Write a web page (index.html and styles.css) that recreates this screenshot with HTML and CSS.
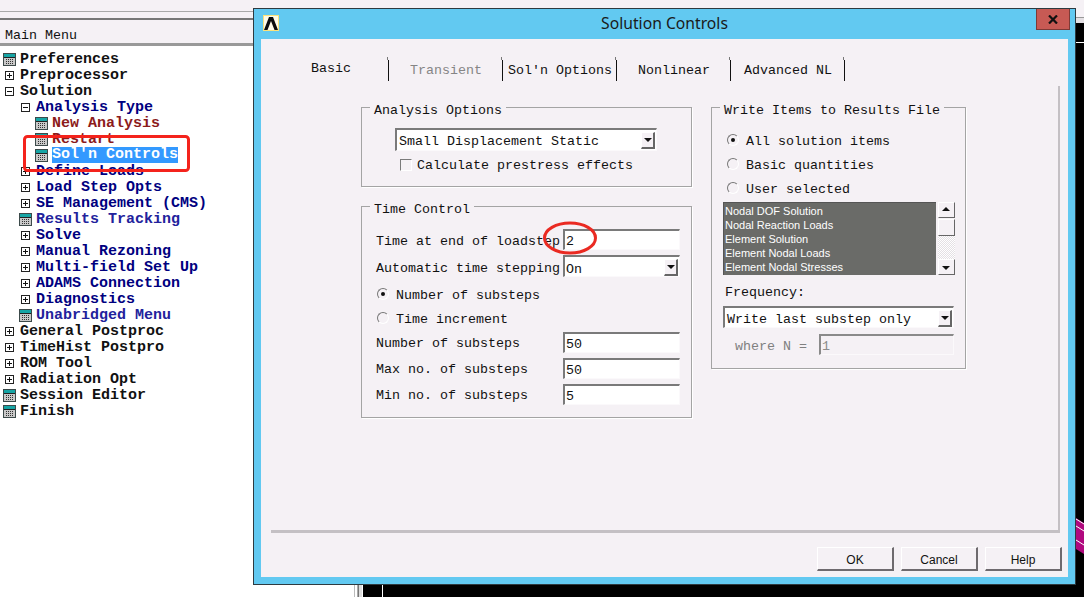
FILE: index.html
```html
<!DOCTYPE html>
<html lang="en">
<head>
<meta charset="utf-8">
<title>Solution Controls</title>
<link rel="stylesheet" href="styles.css">
</head>
<body>
<svg class="defs" width="0" height="0" aria-hidden="true">
  <symbol id="calc" viewBox="0 0 13 13">
    <rect x="0.5" y="0.5" width="12" height="12" fill="#c9c9c9" stroke="#3c4a4a"/>
    <rect x="1" y="1" width="11" height="3" fill="#16a5a5"/>
    <path d="M1 4.5h11" stroke="#222"/>
    <path d="M3 6.5h1M5 6.5h1M7 6.5h1M9 6.5h1M3 8.5h1M5 8.5h1M7 8.5h1M9 8.5h1M3 10.5h1M5 10.5h1M7 10.5h1M9 10.5h1" stroke="#333"/>
  </symbol>
  <symbol id="plus" viewBox="0 0 13 13">
    <rect x="2.5" y="2.5" width="8" height="8" fill="#fff" stroke="#222"/>
    <path d="M4 6.5h5M6.500 4v5" stroke="#111"/>
  </symbol>
  <symbol id="minus" viewBox="0 0 13 13">
    <rect x="2.5" y="2.500" width="8" height="8" fill="#fff" stroke="#222"/>
    <path d="M4 6.500h5" stroke="#111"/>
  </symbol>
</svg>

<div class="desktop">
  <aside class="panel">
    <div class="band band-a"></div>
    <div class="band band-b"></div>
    <div class="panel-title">Main Menu</div>
    <ul class="tree">
      <li class="node"><svg class="ico"><use href="#calc"/></svg>Preferences</li>
      <li class="node"><svg class="ico"><use href="#plus"/></svg>Preprocessor</li>
      <li class="node"><svg class="ico"><use href="#minus"/></svg>Solution</li>
      <li class="node l1 navy"><svg class="ico"><use href="#minus"/></svg>Analysis Type</li>
      <li class="node l2 maroon"><svg class="ico"><use href="#calc"/></svg>New Analysis</li>
      <li class="node l2 maroon"><svg class="ico"><use href="#calc"/></svg>Restart</li>
      <li class="node l2"><svg class="ico"><use href="#calc"/></svg><span class="selected">Sol'n Controls</span></li>
      <li class="node l1 navy"><svg class="ico"><use href="#plus"/></svg>Define Loads</li>
      <li class="node l1 navy"><svg class="ico"><use href="#plus"/></svg>Load Step Opts</li>
      <li class="node l1 navy"><svg class="ico"><use href="#plus"/></svg>SE Management (CMS)</li>
      <li class="node l1 blue"><svg class="ico"><use href="#calc"/></svg>Results Tracking</li>
      <li class="node l1 navy"><svg class="ico"><use href="#plus"/></svg>Solve</li>
      <li class="node l1 navy"><svg class="ico"><use href="#plus"/></svg>Manual Rezoning</li>
      <li class="node l1 navy"><svg class="ico"><use href="#plus"/></svg>Multi-field Set Up</li>
      <li class="node l1 navy"><svg class="ico"><use href="#plus"/></svg>ADAMS Connection</li>
      <li class="node l1 navy"><svg class="ico"><use href="#plus"/></svg>Diagnostics</li>
      <li class="node l1 blue"><svg class="ico"><use href="#calc"/></svg>Unabridged Menu</li>
      <li class="node"><svg class="ico"><use href="#plus"/></svg>General Postproc</li>
      <li class="node"><svg class="ico"><use href="#plus"/></svg>TimeHist Postpro</li>
      <li class="node"><svg class="ico"><use href="#plus"/></svg>ROM Tool</li>
      <li class="node"><svg class="ico"><use href="#plus"/></svg>Radiation Opt</li>
      <li class="node"><svg class="ico"><use href="#calc"/></svg>Session Editor</li>
      <li class="node"><svg class="ico"><use href="#calc"/></svg>Finish</li>
    </ul>
  </aside>
  <div class="strip"></div>
  <div class="backdrop">
    <div class="back-top"></div>
    <div class="back-rule"></div>
    <svg class="mesh" width="8" height="36" viewBox="0 0 8 36" aria-hidden="true">
      <polygon points="0,0 8,5 8,36 0,31" fill="#b0087e"/>
      <path d="M0 1l8 5M0 8l8 5M0 22l8 5" stroke="#fff" fill="none"/>
    </svg>
  </div>
</div>

<section class="dialog">
  <header class="titlebar">
    <svg class="logo" width="16" height="16" viewBox="0 0 16 16" aria-hidden="true">
      <rect width="16" height="16" fill="#fbe27a"/>
      <rect x="1" y="1" width="14" height="14" fill="#fffbe8"/>
      <polygon points="1,15 6,2 10,2 15,15 11.500,15 8,6 4.500,15" fill="#0c0c0c"/>
    </svg>
    <h1 class="title">Solution Controls</h1>
    <div class="close">
      <svg width="10" height="9" viewBox="0 0 10 9" aria-hidden="true"><path d="M1 .5l8 8M9 .5l-8 8" stroke="#111" stroke-width="2.200"/></svg>
    </div>
  </header>
  <div class="client">
    <nav class="tabs">
      <div class="tab tab-active">Basic</div>
      <div class="tab tab-off">Transient</div>
      <div class="tab">Sol'n Options</div>
      <div class="tab">Nonlinear</div>
      <div class="tab">Advanced NL</div>
    </nav>
    <div class="tabpanel">
      <div class="col">
        <div class="group g-analysis">
          <span class="legend">Analysis Options</span>
          <div class="combo c-analysis">Small Displacement Static<span class="drop"></span></div>
          <label class="check"><span class="box"></span>Calculate prestress effects</label>
        </div>
        <div class="group g-time">
          <span class="legend">Time Control</span>
          <div class="row row-high"><span class="lab">Time at end of loadstep</span><div class="field">2</div></div>
          <div class="row row-tall row-high"><span class="lab">Automatic time stepping</span><div class="combo c-row">On<span class="drop"></span></div></div>
          <div class="radio-row"><span class="radio on"></span>Number of substeps</div>
          <div class="radio-row"><span class="radio"></span>Time increment</div>
          <div class="row row-first"><span class="lab">Number of substeps</span><div class="field">50</div></div>
          <div class="row"><span class="lab">Max no. of substeps</span><div class="field">50</div></div>
          <div class="row"><span class="lab">Min no. of substeps</span><div class="field">5</div></div>
        </div>
      </div>
      <div class="group g-write">
        <span class="legend">Write Items to Results File</span>
        <div class="radio-row"><span class="radio on"></span>All solution items</div>
        <div class="radio-row"><span class="radio"></span>Basic quantities</div>
        <div class="radio-row"><span class="radio"></span>User selected</div>
        <div class="listwrap">
          <ul class="list">
            <li>Nodal DOF Solution</li>
            <li>Nodal Reaction Loads</li>
            <li>Element Solution</li>
            <li>Element Nodal Loads</li>
            <li>Element Nodal Stresses</li>
          </ul>
          <div class="scroll">
            <span class="sb sb-up"></span>
            <span class="sb sb-thumb"></span>
            <span class="sb-track"></span>
            <span class="sb sb-down"></span>
          </div>
        </div>
        <div class="freq">Frequency:</div>
        <div class="combo c-freq">Write last substep only<span class="drop"></span></div>
        <div class="where"><span class="where-lab">where N =</span><div class="field field-off">1</div></div>
      </div>
    </div>
    <footer class="actions">
      <button class="btn" type="button">OK</button>
      <button class="btn" type="button">Cancel</button>
      <button class="btn" type="button">Help</button>
    </footer>
  </div>
</section>

<svg class="marks" width="1084" height="597" viewBox="0 0 1084 597" aria-hidden="true">
  <rect x="24.500" y="136.500" width="164" height="34" rx="3" fill="none" stroke="#f4231c" stroke-width="3"/>
  <ellipse cx="570" cy="238" rx="25.500" ry="15" fill="none" stroke="#ea2a22" stroke-width="3"/>
</svg>
</body>
</html>
```

FILE: styles.css
```css
* { box-sizing: border-box; }
html, body { margin: 0; padding: 0; }
body {
  position: relative;
  width: 1084px;
  height: 597px;
  overflow: hidden;
  background: #fff;
  font-family: "Liberation Mono", monospace;
  font-size: 13.33px;
  color: #111;
}
.defs { position: absolute; }
ul { list-style: none; margin: 0; padding: 0; }

/* desktop behind the dialog */
.desktop { display: flex; width: 1084px; height: 597px; }
.panel { width: 354px; background: #fff; }
.band { background: #f5f1f5; }
.band-a { height: 12px; border-bottom: 1px solid #a9a9a9; }
.band-b { height: 8px; border-bottom: 2px solid #777; }
.panel-title {
  height: 26px;
  padding: 6px 0 0 5px;
  line-height: 20px;
  background: #f5f1f5;
  border-bottom: 3px solid #999;
}
.tree { padding-top: 5px; }
.node {
  display: flex;
  align-items: center;
  height: 16px;
  padding-left: 3px;
  font-size: 15px;
  font-weight: 700;
  white-space: pre;
}
.l1 { padding-left: 19px; }
.l2 { padding-left: 35px; }
.ico { width: 13px; height: 13px; margin-right: 4px; flex: none; }
.navy { color: #00007f; }
.blue { color: #22229c; }
.maroon { color: #8c1b1b; }
.selected { background: #3399ff; color: #fff; line-height: 16px; }

.strip {
  width: 9px;
  background:
    linear-gradient(#f5f1f5, #f5f1f5) 0 0 / 100% 18px no-repeat,
    linear-gradient(90deg, #bbb 0 1px, #fff 1px 3px, #aaa 3px 4px, #777 4px 5px, #ddd 5px 8px, #fff 8px);
}
.backdrop {
  position: relative;
  flex: 1;
  background: linear-gradient(#fff, #fff) 19px 0 / 1px 100% no-repeat, #000;
}
.back-top { height: 18px; background: #f5f1f5; border-bottom: 1px solid #999; }
.back-rule { height: 25px; border-bottom: 1px solid #fff; border-top: 5px solid #e4e0e4; }
.mesh { position: absolute; right: 0; top: 518px; }

/* dialog window */
.dialog {
  position: absolute;
  left: 253px;
  top: 8px;
  width: 823px;
  height: 577px;
  display: flex;
  flex-direction: column;
  padding: 0 7px 7px;
  background: #62c9f1;
  border: 1px solid #2e3a40;
  border-top-width: 1px;
}
.titlebar { position: relative; height: 30px; flex: none; }
.logo { position: absolute; left: 2px; top: 6px; }
.title {
  margin: 0;
  text-align: center;
  font: 400 15.7px/28px "Noto Sans", sans-serif;
  color: #1a1a1a;
}
.close {
  position: absolute;
  right: -2px;
  top: 0;
  width: 34px;
  height: 21px;
  display: flex;
  align-items: center;
  justify-content: center;
  background: #c75a54;
  border: 1px solid #7d3a36;
  border-top: 0;
}
.client { flex: 1; background: #f5f1f5; padding-left: 10px; }

/* tabs */
.tabs { display: flex; height: 47px; padding: 18px 0 0 40px; }
.tab {
  position: relative;
  width: 114px;
  height: 24px;
  line-height: 28px;
  text-align: center;
  white-space: pre;
}
.tab::after {
  content: "";
  position: absolute;
  right: 0;
  top: 3px;
  bottom: 0;
  width: 1px;
  background: #111;
}
.tab::before {
  content: "";
  position: absolute;
  right: 1px;
  top: 0;
  width: 1px;
  height: 3px;
  background: #777;
}
.tab-active { width: 78px; text-align: left; line-height: 24px; }
.tab-off { color: #858585; }

.tabpanel {
  display: flex;
  gap: 19px;
  width: 789px;
  height: 447px;
  padding: 21px 0 0 90px;
  border-right: 2px solid #c4c0c4;
  border-bottom: 3px solid #c4c0c4;
}
.col { display: flex; flex-direction: column; gap: 19px; width: 331px; }
.group {
  position: relative;
  border: 1px solid #a4a4a4;
  box-shadow: 1px 1px 0 #fff;
}
.legend {
  position: absolute;
  left: 8px;
  top: -5px;
  padding: 0 4px;
  height: 12px;
  line-height: 15px;
  background: #f5f1f5;
  white-space: pre;
}
.g-analysis { height: 80px; padding: 20px 0 0 33px; }
.g-time { height: 212px; padding: 22px 0 0 14px; }
.g-write { width: 255px; height: 262px; padding: 20px 0 0 11px; }

/* fields */
.field, .combo {
  position: relative;
  background: #fff;
  border-top: 2px solid #7a7a7a;
  border-left: 2px solid #7a7a7a;
  border-right: 1px solid #fbf9fb;
  border-bottom: 1px solid #fbf9fb;
  white-space: pre;
}
.field { width: 117px; height: 21px; padding-left: 1px; line-height: 21px; }
.combo { padding-left: 2px; }
.c-analysis { width: 262px; height: 23px; line-height: 24px; }
.c-row { width: 117px; height: 22px; padding-left: 1px; line-height: 25px; }
.c-freq { width: 231px; height: 22px; margin-top: 6px; line-height: 23px; }
.drop {
  position: absolute;
  right: 1px;
  top: 2px;
  width: 14px;
  height: 17px;
  background: #f5f1f5;
  border-top: 1px solid #fff;
  border-left: 1px solid #fff;
  border-right: 2px solid #666;
  border-bottom: 2px solid #666;
}
.drop::after {
  content: "";
  position: absolute;
  left: 2px;
  top: 5px;
  border: 4px solid transparent;
  border-top: 4px solid #111;
  border-bottom: 0;
}
.check { display: flex; align-items: center; height: 16px; margin: 6px 0 0 5px; white-space: pre; }
.box {
  width: 12px;
  height: 12px;
  margin-right: 5px;
  background: #f5f1f5;
  border-top: 1px solid #7a7a7a;
  border-left: 1px solid #7a7a7a;
  border-right: 1px solid #fff;
  border-bottom: 1px solid #fff;
}
.row { display: flex; align-items: center; height: 21px; margin-bottom: 5px; white-space: pre; }
.row-tall { height: 22px; margin-bottom: 5px; }
.row-first { margin-top: 2px; }
.lab { width: 187px; flex: none; padding-top: 2px; }
.row-high .lab { padding-top: 4px; }
.radio-row { display: flex; align-items: center; height: 24px; padding: 2px 0 0 4px; white-space: pre; }
.g-time .radio-row { padding-left: 1px; }
.radio {
  position: relative;
  width: 12px;
  height: 12px;
  margin: -2px 7px 0 0;
  border-radius: 50%;
  background: #f5f1f5;
  border: 1px solid;
  border-color: #777 #fff #fff #777;
}
.radio.on::after {
  content: "";
  position: absolute;
  left: 3px;
  top: 3px;
  width: 4px;
  height: 4px;
  border-radius: 50%;
  background: #111;
}

/* list */
.listwrap { display: flex; gap: 2px; margin-top: 2px; height: 73px; }
.list {
  width: 213px;
  height: 73px;
  padding: 1px 0 0 1px;
  background: #6a6b68;
  border-top: 1px solid #555;
  border-left: 1px solid #555;
  font: 11px/14px "Liberation Sans", sans-serif;
  color: #fff;
}
.scroll { display: flex; flex-direction: column; width: 17px; }
.sb {
  position: relative;
  display: block;
  background: #f5f1f5;
  border-top: 1px solid #fff;
  border-left: 1px solid #fff;
  border-right: 1px solid #666;
  border-bottom: 1px solid #666;
}
.sb-up, .sb-down { height: 16px; }
.sb-thumb { height: 17px; margin-top: 1px; }
.sb-track {
  flex: 1;
  background: repeating-conic-gradient(#e4e0e4 0 25%, #fff 0 50%) 0 0 / 2px 2px;
}
.sb-up::after, .sb-down::after {
  content: "";
  position: absolute;
  left: 3px;
  border: 4px solid transparent;
}
.sb-up::after { top: 4px; border-bottom: 4px solid #111; border-top: 0; }
.sb-down::after { top: 6px; border-top: 4px solid #111; border-bottom: 0; }
.freq { margin: 10px 0 0 2px; height: 15px; line-height: 16px; }
.where { display: flex; align-items: center; margin-top: 6px; height: 21px; color: #808080; }
.where-lab { width: 96px; padding: 4px 0 0 12px; flex: none; white-space: pre; }
.field-off { width: 135px; background: #f5f1f5; color: #8c8c8c; border-color: #8a8a8a #fbf9fb #fbf9fb #8a8a8a; }

/* footer */
.actions { display: flex; justify-content: flex-end; gap: 7px; padding: 14px 6px 0 0; }
.btn {
  width: 77px;
  height: 24px;
  padding: 2px 0 0;
  background: #f5f1f5;
  border: 0;
  border-top: 1px solid #fff;
  border-left: 1px solid #fff;
  border-right: 2px solid #6e6a6e;
  border-bottom: 2px solid #6e6a6e;
  font: 12px "Liberation Sans", sans-serif;
  color: #111;
}

.marks { position: absolute; left: 0; top: 0; pointer-events: none; }
```
